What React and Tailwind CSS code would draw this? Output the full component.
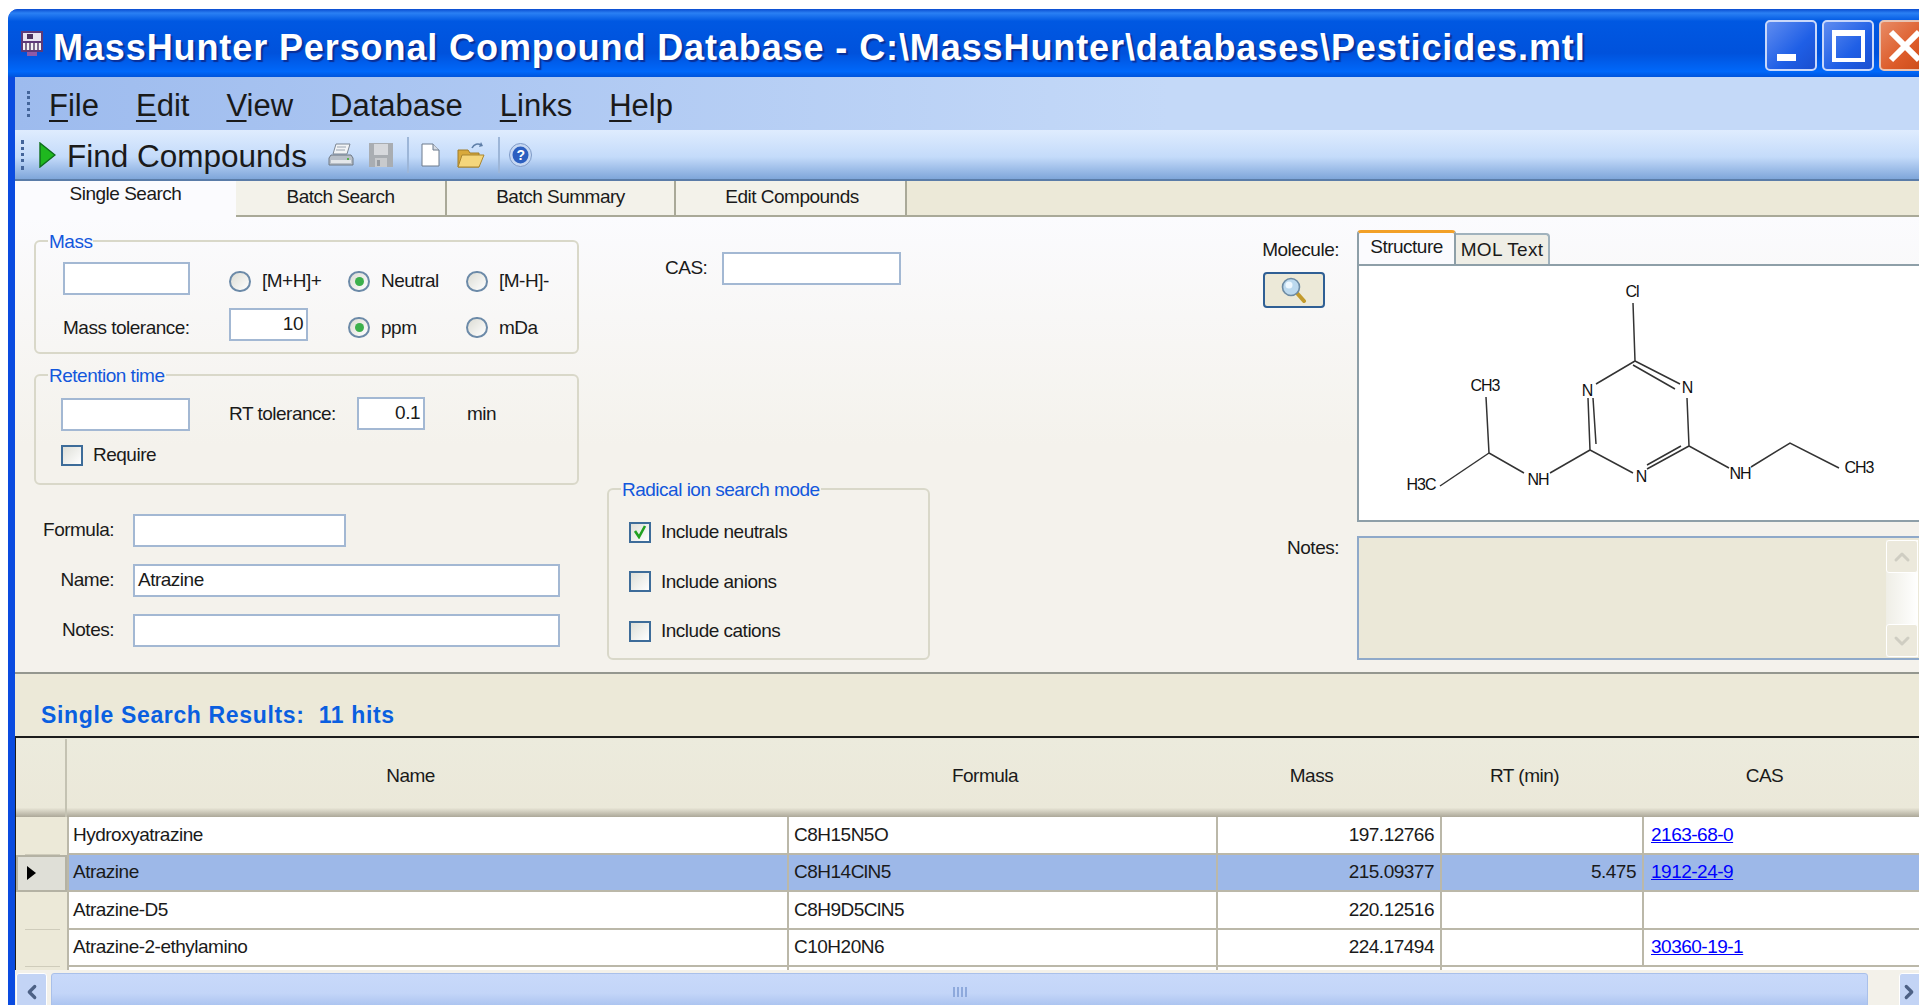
import { ChevronUp, ChevronDown, ChevronLeft, ChevronRight } from 'lucide-react';

const menuItems = ['File', 'Edit', 'View', 'Database', 'Links', 'Help'];

const columns = [
  { label: 'Name', width: 'w-[720px]' },
  { label: 'Formula', width: 'w-[429px]' },
  { label: 'Mass', width: 'w-[224px]' },
  { label: 'RT (min)', width: 'w-[202px]' },
  { label: 'CAS', width: 'w-[278px]' },
];

const hits = [
  { name: 'Hydroxyatrazine', formula: 'C8H15N5O', mass: '197.12766', rt: '', cas: '2163-68-0' },
  { name: 'Atrazine', formula: 'C8H14ClN5', mass: '215.09377', rt: '5.475', cas: '1912-24-9', selected: true },
  { name: 'Atrazine-D5', formula: 'C8H9D5ClN5', mass: '220.12516', rt: '', cas: '' },
  { name: 'Atrazine-2-ethylamino', formula: 'C10H20N6', mass: '224.17494', rt: '', cas: '30360-19-1' },
];

const TextBox = ({ className = '', children }) => (
  <div className={`h-[33px] shrink-0 border-2 border-[#a3b8d3] bg-white px-[3px] leading-[28px] ${className}`}>
    {children}
  </div>
);

const Radio = ({ label, checked }) => (
  <div className="mt-[6px] flex items-center gap-[11px]">
    <span className="flex h-[21px] w-[22px] items-center justify-center rounded-full border-2 border-[#6c8aa8] bg-[linear-gradient(135deg,#dcdcd4,#ffffff)]">
      {checked && <span className="h-[9px] w-[9px] rounded-full bg-[#3cb04c]" />}
    </span>
    <span>{label}</span>
  </div>
);

const Check = ({ label, checked }) => (
  <div className="flex items-center gap-[10px]">
    <span className="flex h-[21px] w-[22px] items-center justify-center border-2 border-[#3d6c99] bg-[linear-gradient(135deg,#dedfd8,#ffffff)]">
      {checked && (
        <svg width="14" height="14" viewBox="0 0 14 14">
          <path d="M2 6l4 6 6-11" fill="none" stroke="#21a121" strokeWidth="2.6" />
        </svg>
      )}
    </span>
    <span>{label}</span>
  </div>
);

const GroupBox = ({ title, className = '', children }) => (
  <fieldset className={`min-w-0 shrink-0 rounded-[6px] border-2 border-[#d9d8c9] ${className}`}>
    <legend className="relative top-px ml-[12px] px-[1px] leading-[24px] text-[#1257dc]">{title}</legend>
    {children}
  </fieldset>
);

const Grip = ({ className = '' }) => (
  <span className={`shrink-0 border-l-[3px] border-dotted border-[#44659a] ${className}`} />
);

const ToolbarSeparator = () => <span className="h-[36px] w-[2px] shrink-0 bg-[#9db6d8]" />;

// Atrazine skeleton, coordinates follow the panel's page position
const Molecule = () => (
  <svg width="561" height="256" viewBox="1358 265 561 256" className="block">
    <g stroke="#333" strokeWidth="1.5" fill="none">
      <path d="M1632 302L1634 360L1595 383" />
      <path d="M1634 360L1679 383M1632 364L1674 388" />
      <path d="M1686 397L1688 445L1728 467" />
      <path d="M1688 445L1646 468M1680 445L1646 464" />
      <path d="M1632 472L1589 449L1587 397M1595 443L1592 397" />
      <path d="M1589 449L1549 472" />
      <path d="M1523 472L1488 452L1485 396" />
      <path d="M1488 452L1439 485" />
      <path d="M1750 466L1789 442L1838 467" />
    </g>
    <g fill="#111" fontSize="16" textAnchor="middle" letterSpacing="-1" fontFamily="'Liberation Sans', sans-serif">
      <text x="1631" y="296">Cl</text>
      <text x="1686" y="392">N</text>
      <text x="1586" y="395">N</text>
      <text x="1640" y="481">N</text>
      <text x="1739" y="478">NH</text>
      <text x="1537" y="484">NH</text>
      <text x="1484" y="390">CH3</text>
      <text x="1420" y="489">H3C</text>
      <text x="1858" y="472">CH3</text>
    </g>
  </svg>
);

const AppIcon = () => (
  <svg width="22" height="25" viewBox="0 0 22 25" className="shrink-0">
    <rect x="0" y="0" width="22" height="21" fill="#5d3a78" />
    <rect x="2" y="2" width="18" height="8" fill="#e8e4f0" />
    <rect x="6" y="3" width="6" height="5" fill="#4b3360" />
    <rect x="2" y="12" width="18" height="7" fill="#f4f4f4" />
    <path d="M5 12v7M9 12v7M13 12v7M17 12v7" stroke="#4b3360" strokeWidth="1.4" />
    <rect x="6" y="21" width="10" height="4" fill="#8e5aa8" />
  </svg>
);

const PrinterIcon = () => (
  <svg width="26" height="24" viewBox="0 0 26 24" className="shrink-0">
    <path d="M8 1h14l-3 10H5z" fill="#f2f4f6" stroke="#7d8794" />
    <path d="M9 4h9M8 7h9" stroke="#9aa4b0" />
    <path d="M3 12h20l2 3v7H1v-7z" fill="#b8bfc8" stroke="#6f7884" />
    <rect x="3" y="17" width="20" height="3" fill="#e4e7ea" />
    <rect x="19" y="15" width="2" height="2" fill="#5bb050" />
  </svg>
);

const SaveIcon = () => (
  <svg width="24" height="24" viewBox="0 0 24 24" className="shrink-0">
    <rect x="0" y="0" width="24" height="24" fill="#a9adb2" />
    <rect x="5" y="1" width="14" height="11" fill="#d6d8dc" />
    <rect x="6" y="15" width="12" height="9" fill="#c8cacd" />
    <rect x="8" y="17" width="3" height="6" fill="#989ca1" />
  </svg>
);

const NewIcon = () => (
  <svg width="19" height="24" viewBox="0 0 19 24" className="shrink-0">
    <path d="M1 1h11l6 6v16H1z" fill="#fff" stroke="#6d7a8c" />
    <path d="M12 1v6h6" fill="#d5dbe4" stroke="#6d7a8c" />
  </svg>
);

const OpenIcon = () => (
  <svg width="28" height="26" viewBox="0 0 28 26" className="shrink-0">
    <path d="M1 8h10l2 3h9v14H1z" fill="#d8a93c" stroke="#a07c28" />
    <path d="M5 13h22l-5 12H1z" fill="#f5d67c" stroke="#a98530" />
    <path d="M15 6c2-4 6-5 9-3" fill="none" stroke="#5f7fa8" strokeWidth="1.6" />
    <path d="M24 0l2 4-4 1z" fill="#5f7fa8" />
  </svg>
);

const HelpIcon = () => (
  <svg width="23" height="24" viewBox="0 0 23 24" className="shrink-0">
    <ellipse cx="11.5" cy="12" rx="11" ry="11.5" fill="#c7d8f2" stroke="#7e9ac6" />
    <ellipse cx="11.5" cy="12" rx="8" ry="8.5" fill="#2c5fc0" />
    <text x="11.5" y="17" textAnchor="middle" fontSize="14" fontWeight="700" fill="#fff" fontFamily="'Liberation Sans', sans-serif">?</text>
  </svg>
);

const SearchIcon = () => (
  <svg width="26" height="26" viewBox="0 0 26 26">
    <path d="M15 15l8 9" stroke="#c29a2c" strokeWidth="4" strokeLinecap="round" />
    <circle cx="10" cy="10" r="8.5" fill="#bcd9ee" stroke="#6d8ba3" strokeWidth="1.6" />
    <circle cx="8" cy="8" r="3.5" fill="#eef8ff" />
  </svg>
);

const App = () => {
  return (
    <div className="h-screen w-screen overflow-hidden bg-white pl-[8px] pt-[9px] font-['Liberation_Sans',Arial,sans-serif] text-[19px] tracking-[-0.5px] text-[#1a1a1a]">
      <div className="w-[1929px] rounded-t-[10px] bg-[#0a4be0]">
        {/* title bar */}
        <div className="flex h-[68px] items-center rounded-t-[10px] bg-[linear-gradient(180deg,#0a4cd0_0%,#2a80f4_6%,#0058e2_18%,#0052dc_65%,#0068fa_92%,#0054dc_100%)] pl-[13px] pr-[6px]">
          <AppIcon />
          <span className="ml-[10px] mt-[10px] text-[36px] font-bold tracking-[0.9px] text-white [text-shadow:2px_2px_1px_#0a2f96]">
            MassHunter Personal Compound Database - C:\MassHunter\databases\Pesticides.mtl
          </span>
          <div className="ml-auto mt-[5px] flex gap-[5px]">
            <div className="flex h-[51px] w-[52px] items-end justify-start rounded-[5px] border-2 border-[#c9d8fa] bg-[linear-gradient(135deg,#5f8cf0,#1f5fe6_60%,#1a4fd0)] pb-[8px] pl-[10px]">
              <span className="h-[7px] w-[19px] bg-white" />
            </div>
            <div className="flex h-[51px] w-[52px] items-center justify-center rounded-[5px] border-2 border-[#c9d8fa] bg-[linear-gradient(135deg,#5f8cf0,#1f5fe6_60%,#1a4fd0)]">
              <span className="h-[32px] w-[33px] border-[4px] border-t-[6px] border-white" />
            </div>
            <div className="flex h-[51px] w-[52px] items-center justify-center rounded-[5px] border-2 border-[#e8c4b4] bg-[linear-gradient(135deg,#e88a64,#dc5a28_60%,#c84a18)]">
              <svg width="34" height="34" viewBox="0 0 34 34">
                <path d="M3 3l28 28M31 3L3 31" stroke="#fff" strokeWidth="6" />
              </svg>
            </div>
          </div>
        </div>

        <div className="border-l-[7px] border-[#0a4be0]">
          {/* menu bar */}
          <div className="flex h-[53px] items-center bg-[linear-gradient(90deg,#9dbbee,#c4d9f8_60%)] text-[31px] tracking-normal">
            <Grip className="ml-[12px] h-[26px]" />
            <div className="ml-[19px] mt-[6px] flex gap-[37px]">
              {menuItems.map((item) => (
                <span key={item}>
                  <span className="underline decoration-2 underline-offset-4">{item[0]}</span>
                  {item.slice(1)}
                </span>
              ))}
            </div>
          </div>

          {/* toolbar */}
          <div className="flex h-[51px] items-center border-b-2 border-[#5a7ca8] bg-[linear-gradient(180deg,#dfecfe_0%,#c4dbfa_55%,#7fa6da_100%)]">
            <Grip className="ml-[6px] h-[30px]" />
            <svg width="17" height="26" viewBox="0 0 17 26" className="ml-[15px] shrink-0">
              <path d="M1 1l15 12L1 25z" fill="#1fb81f" stroke="#0d6d1c" strokeWidth="1.4" />
            </svg>
            <span className="ml-[11px] mt-[5px] w-[241px] shrink-0 whitespace-nowrap text-[31.5px] tracking-normal">Find Compounds</span>
            <span className="ml-[20px] flex items-center"><PrinterIcon /></span>
            <span className="ml-[15px] flex items-center"><SaveIcon /></span>
            <span className="ml-[14px] flex items-center"><ToolbarSeparator /></span>
            <span className="ml-[12px] flex items-center"><NewIcon /></span>
            <span className="ml-[17px] flex items-center"><OpenIcon /></span>
            <span className="ml-[13px] flex items-center"><ToolbarSeparator /></span>
            <span className="ml-[9px] flex items-center"><HelpIcon /></span>
          </div>

          {/* main tabs */}
          <div className="flex h-[36px] bg-[#ece9d8]">
            <div className="flex w-[221px] justify-center bg-[#fbfbfe] pt-[2px] leading-[22px]">Single Search</div>
            <div className="flex w-[211px] items-center justify-center border-b-2 border-r-2 border-[#a9a998] bg-[#f3f2ea] pb-[2px]">Batch Search</div>
            <div className="flex w-[229px] items-center justify-center border-b-2 border-r-2 border-[#a9a998] bg-[#f3f2ea] pb-[2px]">Batch Summary</div>
            <div className="flex w-[231px] items-center justify-center border-b-2 border-r-2 border-[#a9a998] bg-[#f3f2ea] pb-[2px] pl-[3px]">Edit Compounds</div>
            <div className="flex-1 border-b-2 border-[#a9a998]" />
          </div>

          {/* search form */}
          <div className="flex h-[457px] overflow-hidden border-b-2 border-[#94978f] bg-[linear-gradient(180deg,#fbfbfe_0%,#f4f2ec_50%)] pt-[11px]">
            <div className="ml-[19px] w-[545px] shrink-0">
              <GroupBox title="Mass" className="mt-px h-[125px] w-[545px]">
                <div className="grid grid-cols-[166px_119px_118px_1fr] items-center gap-y-[12px] pl-[27px] pt-[8px]">
                  <TextBox className="w-[127px]" />
                  <Radio label="[M+H]+" />
                  <Radio label="Neutral" checked />
                  <Radio label="[M-H]-" />
                  <span className="mt-[6px]">Mass tolerance:</span>
                  <TextBox className="w-[79px] text-right">10</TextBox>
                  <Radio label="ppm" checked />
                  <Radio label="mDa" />
                </div>
              </GroupBox>

              <GroupBox title="Retention time" className="mt-[9px] h-[122px] w-[545px]">
                <div className="flex items-center pl-[25px] pt-[9px]">
                  <TextBox className="mt-[2px] w-[129px]" />
                  <span className="ml-[39px] mt-[2px] w-[128px]">RT tolerance:</span>
                  <TextBox className="w-[68px] text-right">0.1</TextBox>
                  <span className="ml-[42px] mt-[2px]">min</span>
                </div>
                <div className="mt-[10px] pl-[25px]">
                  <Check label="Require" />
                </div>
              </GroupBox>

              <div className="mt-[29px] flex flex-col gap-[17px]">
                <div className="flex items-center">
                  <span className="w-[80px] text-right">Formula:</span>
                  <TextBox className="ml-[19px] w-[213px]" />
                </div>
                <div className="flex items-center">
                  <span className="w-[80px] text-right">Name:</span>
                  <TextBox className="ml-[19px] w-[427px]">Atrazine</TextBox>
                </div>
                <div className="flex items-center">
                  <span className="w-[80px] text-right">Notes:</span>
                  <TextBox className="ml-[19px] w-[427px]" />
                </div>
              </div>
            </div>

            <div className="ml-[28px] w-[323px] shrink-0">
              <div className="mt-[24px] flex items-center">
                <span className="ml-[58px] w-[57px]">CAS:</span>
                <TextBox className="w-[179px]" />
              </div>
              <GroupBox title="Radical ion search mode" className="mt-[192px] h-[183px] w-[323px]">
                <div className="flex flex-col gap-[21px] pl-[20px] pt-[17px]">
                  <Check label="Include neutrals" checked />
                  <Check label="Include anions" />
                  <Check label="Include cations" />
                </div>
              </GroupBox>
            </div>

            <div className="ml-[331px] mt-[2px] w-[658px] shrink-0">
              <div className="flex">
                <div className="w-[96px] shrink-0 pt-[8px]">
                  <div className="pr-[18px] text-right leading-[24px]">Molecule:</div>
                  <button className="ml-[2px] mt-[10px] flex h-[36px] w-[62px] items-center justify-center rounded-[4px] border-2 border-[#2f5f94] bg-[#ece9d8]">
                    <SearchIcon />
                  </button>
                </div>
                <div className="w-[562px] shrink-0">
                  <div className="flex h-[34px] items-end">
                    <div className="flex h-[34px] w-[99px] justify-center rounded-t-[4px] border-x-2 border-t-[3px] border-[#8e9fa8] border-t-[#f2a028] bg-[#fbfbfe] pt-[2px] leading-[24px]">Structure</div>
                    <div className="flex h-[31px] w-[94px] justify-center rounded-tr-[4px] border-r-2 border-t-2 border-[#a0b2bd] bg-[#efeee6] pt-[3px] leading-[24px] tracking-[0.3px]">MOL Text</div>
                  </div>
                  <div className="h-[258px] border-2 border-r-0 border-[#8e9fa8] bg-white">
                    <Molecule />
                  </div>
                </div>
              </div>

              <div className="mt-[14px] flex">
                <div className="w-[96px] shrink-0 pr-[18px] text-right leading-[24px]">Notes:</div>
                <div className="flex h-[124px] w-[562px] shrink-0 justify-end border-2 border-r-0 border-[#8fa9c9] bg-[#ebe8d8] pr-[1px] pt-[2px]">
                  <div className="flex h-[117px] w-[32px] flex-col justify-between bg-[linear-gradient(90deg,#efeee6,#ffffff)]">
                    <div className="flex h-[33px] items-center justify-center rounded-[3px] border border-white bg-[#ece9dc]">
                      <ChevronUp size={24} strokeWidth={3} className="text-[#cfcdc2]" />
                    </div>
                    <div className="flex h-[33px] items-center justify-center rounded-[3px] border border-white bg-[#ece9dc]">
                      <ChevronDown size={24} strokeWidth={3} className="text-[#cfcdc2]" />
                    </div>
                  </div>
                </div>
              </div>
            </div>
          </div>

          {/* results caption */}
          <div className="flex h-[62px] items-end bg-[#ece9d8] pb-[4px] pl-[26px]">
            <span className="whitespace-pre text-[23px] font-bold tracking-[0.65px] text-[#0a5fe0]">Single Search Results:  11 hits</span>
          </div>

          {/* results grid */}
          <div className="h-[234px] overflow-hidden border-l border-t-2 border-[#1c1c1c] bg-[#ece9d8] pt-px">
            <div className="flex h-[78px] bg-[linear-gradient(180deg,#ecebdd_0%,#ebe8d9_88%,#aca899_100%)]">
              <div className="w-[51px] shrink-0 border-r-2 border-[#c4c2b2]" />
              {columns.map((col) => (
                <div key={col.label} className={`flex shrink-0 items-center justify-center pb-[3px] pr-[33px] ${col.width}`}>
                  {col.label}
                </div>
              ))}
            </div>
            {hits.map((hit) => (
              <div key={hit.name} className={`flex h-[37.5px] items-stretch ${hit.selected ? 'bg-[#9db8e8]' : 'bg-white'}`}>
                <div className={`flex w-[51px] shrink-0 items-center pl-[9px] ${hit.selected ? 'border-2 border-[#b4b2a4] bg-[#dfdfd7]' : 'bg-[#ece9d8]'}`}>
                  {hit.selected ? (
                    <svg width="9" height="14" viewBox="0 0 9 14">
                      <path d="M0 0l9 7-9 7z" fill="#000" />
                    </svg>
                  ) : (
                    <span className="mt-auto h-px w-[35px] bg-[#cfccbb]" />
                  )}
                </div>
                <div className="flex w-[720px] shrink-0 items-center border-b-2 border-l-2 border-[#bbb8a9] pl-[4px]">{hit.name}</div>
                <div className="flex w-[429px] shrink-0 items-center border-b-2 border-l-2 border-[#bbb8a9] pl-[5px]">{hit.formula}</div>
                <div className="flex w-[224px] shrink-0 items-center justify-end border-b-2 border-l-2 border-[#bbb8a9] pr-[6px]">{hit.mass}</div>
                <div className="flex w-[202px] shrink-0 items-center justify-end border-b-2 border-l-2 border-[#bbb8a9] pr-[6px]">{hit.rt}</div>
                <div className="flex w-[278px] shrink-0 items-center border-b-2 border-l-2 border-[#bbb8a9] pl-[7px]">
                  <a className="text-[#0000ff] underline">{hit.cas}</a>
                </div>
              </div>
            ))}
            <div className="flex h-[10px] bg-white">
              <div className="w-[51px] shrink-0 bg-[#ece9d8]" />
              <div className="w-[720px] shrink-0 border-l-2 border-[#bbb8a9]" />
              <div className="w-[429px] shrink-0 border-l-2 border-[#bbb8a9]" />
              <div className="w-[224px] shrink-0 border-l-2 border-[#bbb8a9]" />
              <div className="w-[202px] shrink-0 border-l-2 border-[#bbb8a9]" />
            </div>
          </div>

          {/* horizontal scrollbar */}
          <div className="flex h-[40px] bg-[#f3f1ea] pl-px pt-[3px]">
            <div className="flex h-[37px] w-[31px] items-center justify-center rounded-[3px] border border-white bg-[#c3d4f5]">
              <ChevronLeft size={22} strokeWidth={3.5} className="text-[#4d6185]" />
            </div>
            <div className="ml-[4px] flex h-[37px] w-[1817px] shrink-0 items-center justify-center rounded-[3px] border border-[#a9c0ea] bg-[linear-gradient(180deg,#c8d9fa_0%,#c3d5f8_55%,#a5bfee_100%)]">
              <span className="flex gap-[2px]">
                <span className="h-[10px] w-[2px] bg-[#8ea9dc]" />
                <span className="h-[10px] w-[2px] bg-[#8ea9dc]" />
                <span className="h-[10px] w-[2px] bg-[#8ea9dc]" />
                <span className="h-[10px] w-[2px] bg-[#8ea9dc]" />
              </span>
            </div>
            <div className="ml-[31px] flex h-[37px] w-[31px] shrink-0 items-center justify-center rounded-[3px] border border-white bg-[#c3d4f5]">
              <ChevronRight size={22} strokeWidth={3.5} className="-ml-[12px] text-[#4d6185]" />
            </div>
          </div>
        </div>
      </div>
    </div>
  );
};

export default App;
